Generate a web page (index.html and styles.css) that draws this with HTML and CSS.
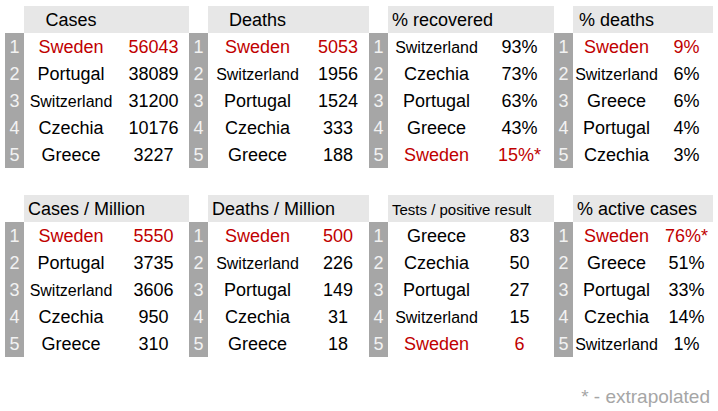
FILE: index.html
```html
<!DOCTYPE html>
<html lang="en">
<head>
<meta charset="utf-8">
<title>Rankings</title>
<link rel="stylesheet" href="styles.css">
</head>
<body>
<div class="page">
  <div class="board">
    <div class="tbl c1">
      <div class="corner"></div>
      <div class="hd"><div class="ht">Cases</div></div>
      <div class="rk">1</div><div class="nm red">Sweden</div><div class="val red">56043</div>
      <div class="rk">2</div><div class="nm">Portugal</div><div class="val">38089</div>
      <div class="rk">3</div><div class="nm sm">Switzerland</div><div class="val">31200</div>
      <div class="rk">4</div><div class="nm">Czechia</div><div class="val">10176</div>
      <div class="rk">5</div><div class="nm">Greece</div><div class="val">3227</div>
    </div>
    <div class="tbl c2">
      <div class="corner"></div>
      <div class="hd"><div class="ht">Deaths</div></div>
      <div class="rk">1</div><div class="nm red">Sweden</div><div class="val red">5053</div>
      <div class="rk">2</div><div class="nm sm">Switzerland</div><div class="val">1956</div>
      <div class="rk">3</div><div class="nm">Portugal</div><div class="val">1524</div>
      <div class="rk">4</div><div class="nm">Czechia</div><div class="val">333</div>
      <div class="rk">5</div><div class="nm">Greece</div><div class="val">188</div>
    </div>
    <div class="tbl c3">
      <div class="corner"></div>
      <div class="hd"><div class="ht">% recovered</div></div>
      <div class="rk">1</div><div class="nm sm">Switzerland</div><div class="val">93%</div>
      <div class="rk">2</div><div class="nm">Czechia</div><div class="val">73%</div>
      <div class="rk">3</div><div class="nm">Portugal</div><div class="val">63%</div>
      <div class="rk">4</div><div class="nm">Greece</div><div class="val">43%</div>
      <div class="rk">5</div><div class="nm red">Sweden</div><div class="val red">15%*</div>
    </div>
    <div class="tbl c4">
      <div class="corner"></div>
      <div class="hd"><div class="ht">% deaths</div></div>
      <div class="rk">1</div><div class="nm red">Sweden</div><div class="val red">9%</div>
      <div class="rk">2</div><div class="nm sm">Switzerland</div><div class="val">6%</div>
      <div class="rk">3</div><div class="nm">Greece</div><div class="val">6%</div>
      <div class="rk">4</div><div class="nm">Portugal</div><div class="val">4%</div>
      <div class="rk">5</div><div class="nm">Czechia</div><div class="val">3%</div>
    </div>

    <div class="tbl c1">
      <div class="corner"></div>
      <div class="hd"><div class="ht">Cases / Million</div></div>
      <div class="rk">1</div><div class="nm red">Sweden</div><div class="val red">5550</div>
      <div class="rk">2</div><div class="nm">Portugal</div><div class="val">3735</div>
      <div class="rk">3</div><div class="nm sm">Switzerland</div><div class="val">3606</div>
      <div class="rk">4</div><div class="nm">Czechia</div><div class="val">950</div>
      <div class="rk">5</div><div class="nm">Greece</div><div class="val">310</div>
    </div>
    <div class="tbl c2">
      <div class="corner"></div>
      <div class="hd"><div class="ht">Deaths / Million</div></div>
      <div class="rk">1</div><div class="nm red">Sweden</div><div class="val red">500</div>
      <div class="rk">2</div><div class="nm sm">Switzerland</div><div class="val">226</div>
      <div class="rk">3</div><div class="nm">Portugal</div><div class="val">149</div>
      <div class="rk">4</div><div class="nm">Czechia</div><div class="val">31</div>
      <div class="rk">5</div><div class="nm">Greece</div><div class="val">18</div>
    </div>
    <div class="tbl c3">
      <div class="corner"></div>
      <div class="hd"><div class="ht small">Tests / positive result</div></div>
      <div class="rk">1</div><div class="nm">Greece</div><div class="val">83</div>
      <div class="rk">2</div><div class="nm">Czechia</div><div class="val">50</div>
      <div class="rk">3</div><div class="nm">Portugal</div><div class="val">27</div>
      <div class="rk">4</div><div class="nm sm">Switzerland</div><div class="val">15</div>
      <div class="rk">5</div><div class="nm red">Sweden</div><div class="val red">6</div>
    </div>
    <div class="tbl c4">
      <div class="corner"></div>
      <div class="hd"><div class="ht">% active cases</div></div>
      <div class="rk">1</div><div class="nm red">Sweden</div><div class="val red">76%*</div>
      <div class="rk">2</div><div class="nm">Greece</div><div class="val">51%</div>
      <div class="rk">3</div><div class="nm">Portugal</div><div class="val">33%</div>
      <div class="rk">4</div><div class="nm">Czechia</div><div class="val">14%</div>
      <div class="rk">5</div><div class="nm sm">Switzerland</div><div class="val">1%</div>
    </div>
  </div>
  <p class="note">* - extrapolated</p>
</div>
</body>
</html>
```
FILE: styles.css
```css
html, body {
  margin: 0;
  padding: 0;
  background: #ffffff;
}

body {
  font-family: "Liberation Sans", Arial, sans-serif;
  color: #000000;
}

.page {
  padding: 6px 0 0 5px;
}

.board {
  display: grid;
  grid-template-columns: 184px 180px 185px 159px;
  row-gap: 27px;
}

.tbl {
  display: grid;
  grid-template-columns: 19px var(--name) var(--num);
  grid-auto-rows: 27px;
  font-size: 18px;
}

.c1 { --name: 94px; --num: 71px; }
.c2 { --name: 99px; --num: 62px; }
.c3 { --name: 97px; --num: 69px; }
.c4 { --name: 87px; --num: 53px; }

.corner {
  background: #ffffff;
}

.hd {
  grid-column: span 2;
  background: #e7e7e7;
}

.ht {
  box-sizing: border-box;
  width: var(--name);
  padding: 2px 4px 0;
  line-height: 25px;
  text-align: center;
  white-space: nowrap;
}

.ht.small {
  font-size: 15px;
}

.rk,
.nm,
.val {
  box-sizing: border-box;
  padding-top: 2px;
  line-height: 25px;
  text-align: center;
  white-space: nowrap;
}

.rk {
  background: #a6a6a6;
  color: #f2f2f2;
}

.nm.sm {
  font-size: 16px;
}

.red {
  color: #c00000;
}

.note {
  margin: 27px 0 0;
  padding-right: 8px;
  text-align: right;
  font-size: 19px;
  line-height: 25px;
  color: #a6a6a6;
}
```
